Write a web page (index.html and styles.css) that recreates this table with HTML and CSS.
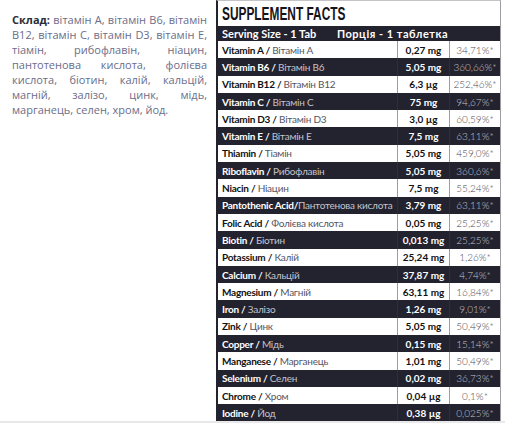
FILE: index.html
```html
<!DOCTYPE html>
<html lang="uk">
  <head>
    <meta charset="UTF-8" />
    <meta name="viewport" content="width=device-width, initial-scale=1.0" />
    <title>Supplement Facts</title>
    <link rel="stylesheet" href="styles.css">
  </head>
  <body>
    <div class="page">
      <div class="composition">
        <span><b>Склад:</b> вітамін А, вітамін В6, вітамін</span>
        <span>В12, вітамін С, вітамін D3, вітамін Е,</span>
        <span>тіамін, рибофлавін, ніацин,</span>
        <span>пантотенова кислота, фолієва</span>
        <span>кислота, біотин, калій, кальцій,</span>
        <span>магній, залізо, цинк, мідь,</span>
        <span class="last">марганець, селен, хром, йод.</span>
      </div>

      <div class="facts">
        <div class="facts-title"><span>SUPPLEMENT FACTS</span></div>
        <div class="facts-head">
          <span class="serving">Serving Size - 1 Tab</span>
          <span class="portion">Порція - 1 таблетка</span>
        </div>

        <div class="row"><div class="name"><b>Vitamin A /</b>&nbsp;Вітамін А</div><div class="amount">0,27 mg</div><div class="pct">34,71%*</div></div>
        <div class="row dark"><div class="name"><b>Vitamin B6 /</b>&nbsp;Вітамін В6</div><div class="amount">5,05 mg</div><div class="pct">360,66%*</div></div>
        <div class="row"><div class="name"><b>Vitamin B12 /</b>&nbsp;Вітамін В12</div><div class="amount">6,3 µg</div><div class="pct">252,46%*</div></div>
        <div class="row dark"><div class="name"><b>Vitamin C /</b>&nbsp;Вітамін С</div><div class="amount">75 mg</div><div class="pct">94,67%*</div></div>
        <div class="row"><div class="name"><b>Vitamin D3 /</b>&nbsp;Вітамін D3</div><div class="amount">3,0 µg</div><div class="pct">60,59%*</div></div>
        <div class="row dark"><div class="name"><b>Vitamin E /</b>&nbsp;Вітамін Е</div><div class="amount">7,5 mg</div><div class="pct">63,11%*</div></div>
        <div class="row"><div class="name"><b>Thiamin /</b>&nbsp;Тіамін</div><div class="amount">5,05 mg</div><div class="pct">459,0%*</div></div>
        <div class="row dark"><div class="name"><b>Riboflavin /</b>&nbsp;Рибофлавін</div><div class="amount">5,05 mg</div><div class="pct">360,6%*</div></div>
        <div class="row"><div class="name"><b>Niacin /</b>&nbsp;Ніацин</div><div class="amount">7,5 mg</div><div class="pct">55,24%*</div></div>
        <div class="row dark"><div class="name"><b>Pantothenic Acid/</b>Пантотенова кислота</div><div class="amount">3,79 mg</div><div class="pct">63,11%*</div></div>
        <div class="row"><div class="name"><b>Folic Acid /</b>&nbsp;Фолієва кислота</div><div class="amount">0,05 mg</div><div class="pct">25,25%*</div></div>
        <div class="row dark"><div class="name"><b>Biotin /</b>&nbsp;Біотин</div><div class="amount">0,013 mg</div><div class="pct">25,25%*</div></div>
        <div class="row"><div class="name"><b>Potassium /</b>&nbsp;Калій</div><div class="amount">25,24 mg</div><div class="pct">1,26%*</div></div>
        <div class="row dark"><div class="name"><b>Calcium /</b>&nbsp;Кальцій</div><div class="amount">37,87 mg</div><div class="pct">4,74%*</div></div>
        <div class="row"><div class="name"><b>Magnesium /</b>&nbsp;Магній</div><div class="amount">63,11 mg</div><div class="pct">16,84%*</div></div>
        <div class="row dark"><div class="name"><b>Iron /</b>&nbsp;Залізо</div><div class="amount">1,26 mg</div><div class="pct">9,01%*</div></div>
        <div class="row"><div class="name"><b>Zink /</b>&nbsp;Цинк</div><div class="amount">5,05 mg</div><div class="pct">50,49%*</div></div>
        <div class="row dark"><div class="name"><b>Copper /</b>&nbsp;Мідь</div><div class="amount">0,15 mg</div><div class="pct">15,14%*</div></div>
        <div class="row"><div class="name"><b>Manganese /</b>&nbsp;Марганець</div><div class="amount">1,01 mg</div><div class="pct">50,49%*</div></div>
        <div class="row dark"><div class="name"><b>Selenium /</b>&nbsp;Селен</div><div class="amount">0,02 mg</div><div class="pct">36,73%*</div></div>
        <div class="row"><div class="name"><b>Chrome /</b>&nbsp;Хром</div><div class="amount">0,04 µg</div><div class="pct">0,1%*</div></div>
        <div class="row dark"><div class="name"><b>Iodine /</b>&nbsp;Йод</div><div class="amount">0,38 µg</div><div class="pct">0,025%*</div></div>
      </div>
    </div>
  </body>
</html>
```

FILE: styles.css
```css
body {
  margin: 0;
  padding: 0;
  background: #e8e8ea;
  font-family: "Open Sans", sans-serif;
}

.page {
  height: 421px;
  background: #fff;
  display: flex;
  align-items: flex-start;
  overflow: hidden;
}

/* Composition text on the left */
.composition {
  width: 195px;
  padding: 12px 0 0 12px;
  margin-right: 9px;
  font-size: 11px;
  line-height: 15px;
  color: #6b6d8a;
}

.composition span {
  display: block;
  text-align: justify;
  text-align-last: justify;
}

.composition span.last {
  text-align-last: left;
}

.composition b {
  color: #2c2c34;
}

/* Supplement facts table */
.facts {
  width: 282px;
  height: 420px;
  border-top: 1px solid #c4c4c8;
  border-left: 2px solid #23222f;
  border-right: 1px solid #9c9ca2;
  font-family: "Lato", "Liberation Sans", sans-serif;
  font-size: 10px;
  color: #111;
  overflow: hidden;
}

.facts-title {
  height: 25px;
  padding-left: 4px;
  line-height: 26px;
  overflow: hidden;
}

.facts-title span {
  display: inline-block;
  font-family: "Liberation Sans", sans-serif;
  font-weight: bold;
  font-size: 18px;
  color: #141419;
  transform: scaleX(0.66);
  transform-origin: left center;
  white-space: nowrap;
}

.facts-head {
  height: 15px;
  padding-left: 4px;
  background: #23222f;
  color: #fff;
  font-weight: bold;
  font-size: 11px;
  display: flex;
  align-items: center;
  white-space: nowrap;
}

.facts-head .serving {
  width: 115px;
}

.facts-head .portion {
  letter-spacing: 0.5px;
}

.row {
  height: 17.3px;
  display: grid;
  grid-template-columns: 179px 52px 51px;
  background: #fff;
}

.row > div {
  display: flex;
  align-items: center;
  white-space: nowrap;
}

.name {
  padding-left: 4px;
  color: #55555f;
  letter-spacing: -0.25px;
}

.name b {
  color: #111;
}

.amount {
  justify-content: center;
  border-left: 1px solid #9c9ca2;
  font-weight: bold;
}

.pct {
  justify-content: center;
  border-left: 1px solid #9c9ca2;
  color: #4a4a52;
  font-weight: 300;
}

.row.dark {
  background: #23222f;
}

.row.dark .name,
.row.dark .pct {
  color: #c4c4cc;
}

.row.dark .name b,
.row.dark .amount {
  color: #fff;
}

.row.dark .amount,
.row.dark .pct {
  border-left-color: #2f2e3b;
}
```
